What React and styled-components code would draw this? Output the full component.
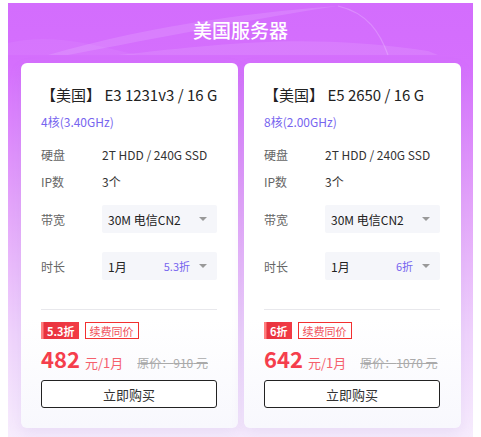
import React from 'react';
import styled, {createGlobalStyle} from 'styled-components';

const Global = createGlobalStyle`
  body {
    margin: 0;
    padding: 3px 8px 0;
    background: #fff;
    font-family: "Noto Sans CJK SC", "Noto Sans", sans-serif;
  }
`

const Panel = styled.div`
  position: relative;
  overflow: hidden;
  height: 440px;
  background: linear-gradient(180deg, #d36dfd 0%, #d56ffd 14%, #e3a3fa 45%, #efd3fc 75%, #f7eefd 100%);
`

const Waves = styled.svg`
  position: absolute;
  left: 0;
  top: 0;
`

const Title = styled.h2`
  position: relative;
  margin: 0;
  padding-top: 14px;
  height: 60px;
  box-sizing: border-box;
  text-align: center;
  color: #fff;
  font-size: 19px;
  font-weight: 500;
  line-height: 26px;
`

const Cards = styled.div`
  position: relative;
  display: grid;
  grid-template-columns: 217px 217px;
  gap: 6px;
  padding: 0 0 0 13px;
`

const Card = styled.div`
  border-radius: 6px;
  padding: 21px 21px 20px 20px;
  box-shadow: 0 6px 14px rgba(150, 120, 200, 0.12);
  background: linear-gradient(180deg, #fff 70%, #f8f8fd 100%);
`

const Name = styled.div`
  font-size: 15px;
  color: #222;
  line-height: 22px;
  white-space: nowrap;
`

const Cores = styled.div`
  margin-top: 7px;
  font-size: 12px;
  color: #7765ef;
  line-height: 18px;
`

const Row = styled.div`
  display: flex;
  align-items: center;
  height: ${p => p.$h || 27}px;
  margin-top: ${p => p.$mt || 0}px;
  font-size: 12px;
`

const Label = styled.span`
  width: 61px;
  color: #666;
`

const Value = styled.span`
  color: #333;
`

const Select = styled.div`
  flex: 1;
  height: 28px;
  display: flex;
  align-items: center;
  padding: 0 10px 0 6px;
  background: #f5f6fa;
  border-radius: 2px;
  color: #222;
  font-size: 12px;
`

const SelText = styled.span`
  flex: 1;
`

const Off = styled.span`
  color: #7765ef;
  font-size: 11px;
  margin-right: 9px;
`

const Caret = styled.span`
  width: 0;
  height: 0;
  border-left: 4px solid transparent;
  border-right: 4px solid transparent;
  border-top: 4px solid #999;
`

const Divider = styled.div`
  height: 1px;
  background: #e8e8ec;
  margin-top: 29px;
`

const Tags = styled.div`
  display: flex;
  align-items: center;
  gap: 6px;
  margin-top: 12px;
`

const Badge = styled.span`
  height: 17px;
  padding: 0 4px 0 6px;
  display: flex;
  align-items: center;
  color: #fff;
  font-size: 11px;
  font-weight: 700;
  background: linear-gradient(90deg, #ff8080 0, #ff8080 2px, #e8323d 3px, #f23b45 100%);
`

const Outline = styled.span`
  height: 15px;
  padding: 0 4px;
  display: flex;
  align-items: center;
  border: 1px solid #f23030;
  color: #f0505a;
  font-size: 11px;
`

const Price = styled.div`
  display: flex;
  align-items: baseline;
  margin-top: 4px;
  height: 30px;
  line-height: 30px;
`

const Num = styled.span`
  font-size: 22px;
  font-weight: 700;
  color: #f53e4c;
`

const Unit = styled.span`
  margin-left: 5px;
  font-size: 13px;
  color: #f5606c;
`

const Orig = styled.span`
  margin-left: 14px;
  font-size: 12px;
  color: #aaa;
  text-decoration: line-through;
`

const Buy = styled.button`
  display: block;
  width: 100%;
  height: 28px;
  margin-top: 7px;
  background: #fff;
  border: 1px solid #222;
  border-radius: 3px;
  font-family: inherit;
  font-size: 13px;
  color: #333;
`

const servers = [
  {name: 'E3 1231v3 / 16 G', cores: '4核(3.40GHz)', off: '5.3折', price: 482, orig: 910},
  {name: 'E5 2650 / 16 G', cores: '8核(2.00GHz)', off: '6折', price: 642, orig: 1070},
]

function ServerCard({s}) {
  return (
    <Card>
      <Name>【美国】 {s.name}</Name>
      <Cores>{s.cores}</Cores>
      <Row $mt={10}><Label>硬盘</Label><Value>2T HDD / 240G SSD</Value></Row>
      <Row><Label>IP数</Label><Value>3个</Value></Row>
      <Row $h={28} $mt={10}>
        <Label>带宽</Label>
        <Select><SelText>30M 电信CN2</SelText><Caret /></Select>
      </Row>
      <Row $h={28} $mt={19}>
        <Label>时长</Label>
        <Select><SelText>1月</SelText><Off>{s.off}</Off><Caret /></Select>
      </Row>
      <Divider />
      <Tags><Badge>{s.off}</Badge><Outline>续费同价</Outline></Tags>
      <Price>
        <Num>{s.price}</Num>
        <Unit>元/1月</Unit>
        <Orig>原价：{s.orig} 元</Orig>
      </Price>
      <Buy>立即购买</Buy>
    </Card>
  )
}

export default function App() {
  return (
    <Panel>
      <Global />
      <Waves width="465" height="70" viewBox="0 0 465 70">
        <path d="M40 52 C150 20 260 8 330 3 C250 15 150 35 60 52 Z" fill="rgba(255,255,255,0.12)" />
        <path d="M110 52 C220 40 300 30 420 48 L430 52 Z" fill="rgba(255,255,255,0.1)" />
        <path d="M330 3 C360 10 372 30 380 52" stroke="rgba(255,255,255,0.2)" strokeWidth="1.2" fill="none" />
        <path d="M0 40 C40 30 80 40 130 52 L0 52 Z" fill="rgba(255,255,255,0.05)" />
      </Waves>
      <Title>美国服务器</Title>
      <Cards>
        {servers.map(s => <ServerCard key={s.price} s={s} />)}
      </Cards>
    </Panel>
  )
}
